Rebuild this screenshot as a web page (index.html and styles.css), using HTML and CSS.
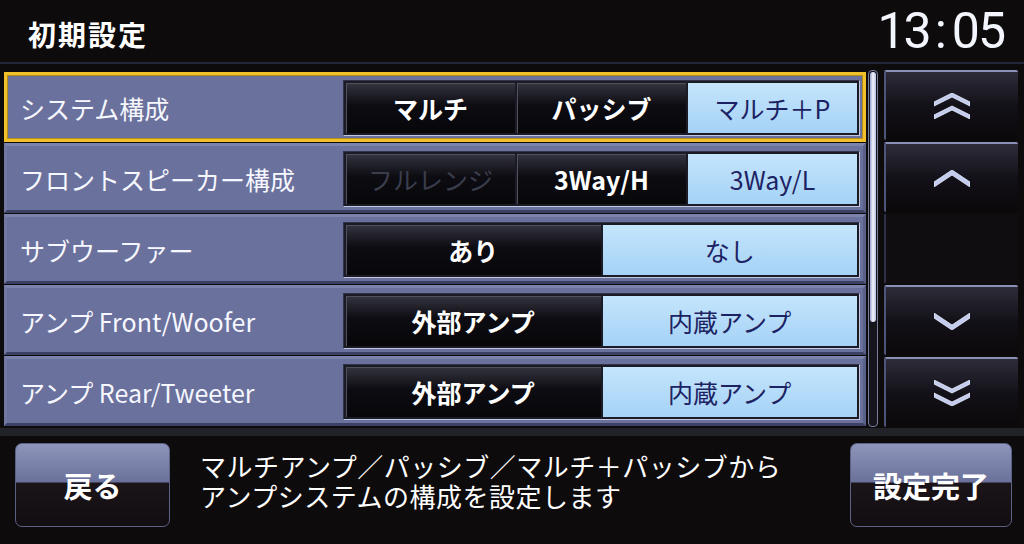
FILE: index.html
```html
<!DOCTYPE html>
<html lang="ja">
<head>
    <meta charset="UTF-8">
    <meta name="viewport" content="width=device-width, initial-scale=1.0">
    <title>初期設定</title>
    <link rel="stylesheet" href="styles.css">
</head>
<body>
<div class="screen">
    <header class="top">
        <h1 class="title">初期設定</h1>
        <div class="clock">13<span class="colon">:</span>05</div>
    </header>

    <div class="main">
        <div class="list">
            <div class="row selected">
                <span class="label">システム構成</span>
                <div class="choices">
                    <div class="opt">マルチ</div>
                    <div class="opt">パッシブ</div>
                    <div class="opt on">マルチ＋P</div>
                </div>
            </div>
            <div class="row">
                <span class="label">フロントスピーカー構成</span>
                <div class="choices">
                    <div class="opt off">フルレンジ</div>
                    <div class="opt">3Way/H</div>
                    <div class="opt on">3Way/L</div>
                </div>
            </div>
            <div class="row">
                <span class="label">サブウーファー</span>
                <div class="choices">
                    <div class="opt">あり</div>
                    <div class="opt on">なし</div>
                </div>
            </div>
            <div class="row">
                <span class="label">アンプ Front/Woofer</span>
                <div class="choices">
                    <div class="opt">外部アンプ</div>
                    <div class="opt on">内蔵アンプ</div>
                </div>
            </div>
            <div class="row">
                <span class="label">アンプ Rear/Tweeter</span>
                <div class="choices">
                    <div class="opt">外部アンプ</div>
                    <div class="opt on">内蔵アンプ</div>
                </div>
            </div>
        </div>

        <div class="scrollbar"><div class="thumb"></div></div>

        <div class="pager">
            <button class="page-btn">
                <svg width="36" height="26" viewBox="0 0 36 26">
                    <polygon class="chev" points="0,9 18,0 36,9 36,13 18,4 0,13"/>
                    <polygon class="chev" points="0,22 18,13 36,22 36,26 18,17 0,26"/>
                </svg>
            </button>
            <button class="page-btn">
                <svg width="36" height="17" viewBox="0 0 36 17">
                    <polygon class="chev" points="0,12 18,0 36,12 36,17 18,5 0,17"/>
                </svg>
            </button>
            <div class="page-slot"></div>
            <button class="page-btn">
                <svg width="36" height="17" viewBox="0 0 36 17">
                    <polygon class="chev" points="0,0 18,12 36,0 36,5 18,17 0,5"/>
                </svg>
            </button>
            <button class="page-btn">
                <svg width="36" height="26" viewBox="0 0 36 26">
                    <polygon class="chev" points="0,0 18,9 36,0 36,4 18,13 0,4"/>
                    <polygon class="chev" points="0,13 18,22 36,13 36,17 18,26 0,17"/>
                </svg>
            </button>
        </div>
    </div>

    <footer class="bottom">
        <button class="big-btn">戻る</button>
        <p class="desc">マルチアンプ／パッシブ／マルチ＋パッシブから<br>アンプシステムの構成を設定します</p>
        <button class="big-btn done">設定完了</button>
    </footer>
</div>
</body>
</html>
```

FILE: styles.css
```css
body {
    margin: 0;
    background-color: #0d0a0b;
    font-family: "Noto Sans CJK JP", "Noto Sans", sans-serif;
    color: #fff;
}
.screen {
    width: 1024px;
    height: 544px;
    display: flex;
    flex-direction: column;
    overflow: hidden;
    background-color: #0e0b0c;
}

/* header */
.top {
    height: 64px;
    box-sizing: border-box;
    display: flex;
    justify-content: space-between;
    align-items: center;
    padding: 0 20px 0 28px;
    border-bottom: 2px solid #23263a;
}
.title {
    margin: 0;
    padding-top: 6px;
    font-size: 28px;
    font-weight: 700;
    letter-spacing: 2px;
}
.clock {
    align-self: flex-start;
    margin-top: 2px;
    font-family: Roboto, sans-serif;
    font-size: 50px;
    font-weight: 400;
    letter-spacing: -2px;
    color: #f4f6ff;
}
.colon {
    margin: 0 7px 0 5px;
}

/* list area */
.main {
    display: flex;
    height: 364px;
    box-sizing: border-box;
    padding-top: 6px;
}
.list {
    width: 862px;
    margin-left: 4px;
    padding-top: 2px;
    display: flex;
    flex-direction: column;
    gap: 1px;
}
.row {
    height: 70px;
    box-sizing: border-box;
    display: flex;
    align-items: center;
    background-color: #6a719c;
    border: 3px solid;
    border-color: #7c84ae #5a6189 #3b4064 #7178a3;
    padding: 2px 3px 0 13px;
}
.row.selected {
    border-color: #f1c02a;
    box-shadow: inset 0 0 0 1px #b38c1a;
}
.label {
    flex: 1;
    font-size: 25px;
    color: #f6f7ff;
}
.choices {
    width: 517px;
    height: 56px;
    box-sizing: border-box;
    display: flex;
    gap: 2px;
    padding: 2px;
    background-color: #1b1b25;
    border: 1px solid;
    border-color: #30334a #c2c8e4 #c2c8e4 #30334a;
}
.opt {
    flex: 1;
    display: flex;
    align-items: center;
    justify-content: center;
    font-size: 25px;
    font-weight: 700;
    color: #fff;
    background: linear-gradient(#34343f, #0d0c12 45%, #070609);
    box-shadow: inset 1px 1px 0 #50505e;
}
.opt.on {
    background: linear-gradient(#c4e5fc, #a5d2f6);
    color: #1c2262;
    font-weight: 400;
    box-shadow: none;
}
.opt.off {
    color: #3a3d4c;
    font-weight: 400;
}

/* scrollbar */
.scrollbar {
    width: 10px;
    height: 357px;
    margin-left: 2px;
    box-sizing: border-box;
    padding: 1px;
    border: 1px solid #777d9e;
    border-radius: 4px;
    background-color: #16151c;
}
.thumb {
    height: 250px;
    border-radius: 4px;
    background: linear-gradient(90deg, #98a1cb, #f2f4ff 50%, #b7bee0);
}

/* page buttons */
.pager {
    width: 134px;
    margin-left: 6px;
    display: flex;
    flex-direction: column;
    gap: 2px;
}
.page-btn {
    height: 70px;
    padding: 0;
    border: none;
    border-top: 2px solid #8a91b8;
    border-left: 2px solid #4f5578;
    border-radius: 2px;
    background: linear-gradient(#2d2c39, #131118 50%, #0a0809);
    display: flex;
    align-items: center;
    justify-content: center;
}
.page-slot {
    height: 69px;
    border-left: 2px solid #2e3145;
    background-color: #0f0d10;
}
.chev {
    fill: #c3cbef;
    stroke: #eef1ff;
    stroke-width: 0.8;
}

/* footer */
.bottom {
    flex: 1;
    display: flex;
    align-items: flex-start;
    padding: 7px 12px 0 15px;
    border-top: 8px solid #222229;
}
.big-btn {
    width: 155px;
    height: 84px;
    border: 1px solid #5b6286;
    border-radius: 7px;
    background: linear-gradient(#8d95bb, #6a729b 46%, #1b1519 48%, #120d10);
    color: #fff;
    font-family: inherit;
    font-size: 29px;
    font-weight: 700;
}
.done {
    width: 162px;
    margin-left: auto;
}
.desc {
    margin: 0 0 0 30px;
    padding-top: 8px;
    font-size: 26px;
    line-height: 30px;
    letter-spacing: 0.5px;
}
```
